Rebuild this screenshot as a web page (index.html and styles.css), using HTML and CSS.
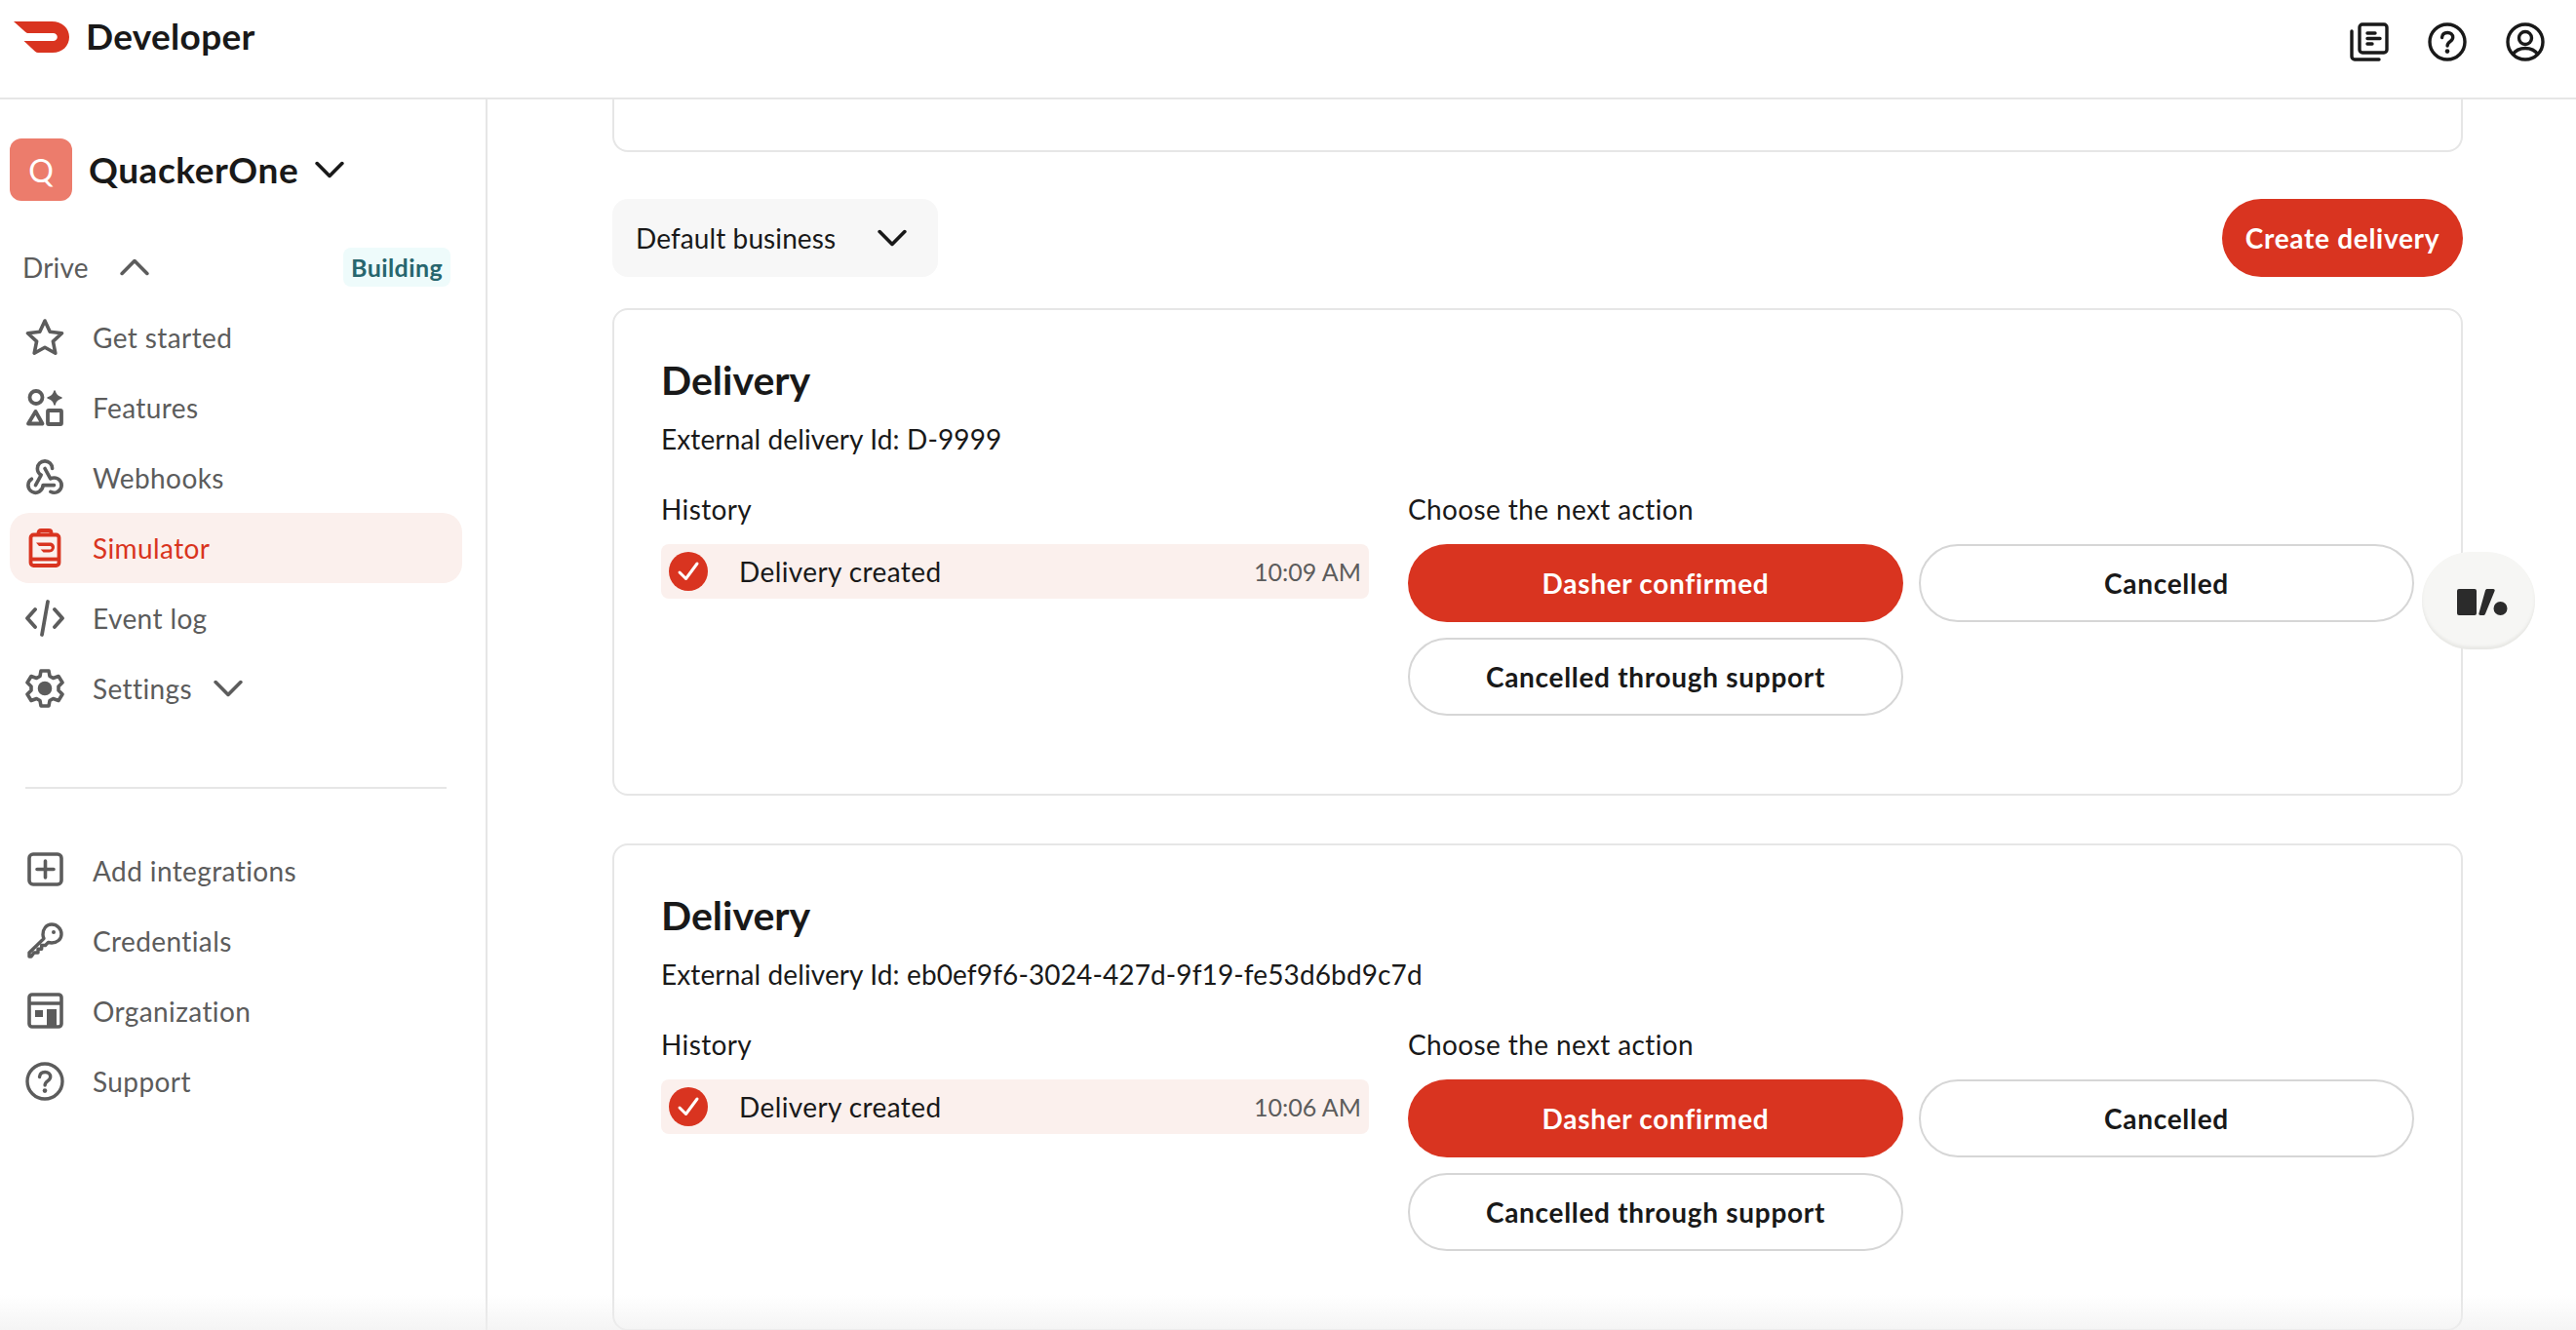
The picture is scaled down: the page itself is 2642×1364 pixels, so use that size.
FILE: index.html
```html
<!DOCTYPE html>
<html lang="en">
<head>
<meta charset="utf-8">
<title>Developer</title>
<link rel="stylesheet" href="styles.css">
</head>
<body>
<svg class="defs" width="0" height="0" aria-hidden="true">
  <symbol id="chev" viewBox="0 0 28 16"><path d="M2 2l12 12L26 2" fill="none" stroke="currentColor" stroke-width="3.4" stroke-linecap="round" stroke-linejoin="round"/></symbol>
  <symbol id="help" viewBox="0 0 40 40"><circle cx="20" cy="20" r="18" fill="none" stroke="currentColor" stroke-width="3.4"/><path d="M14.5 15.5c.3-3.2 2.6-5 5.7-5 3.200 0 5.500 2 5.500 4.800 0 2-1.100 3.200-2.800 4.400-1.700 1.200-2.800 2-2.800 4.300" fill="none" stroke="currentColor" stroke-width="3.4" stroke-linecap="round"/><circle cx="20" cy="29.600" r="2.300" fill="currentColor"/></symbol>
</svg>
<header class="topbar">
  <div class="brand">
    <svg class="logo" viewBox="0 0 58 34"><path d="M0 1h39c11 0 18 7 18 16s-7 16-17 16H25c-1 0-2-.5-3-1.300L10.500 21h30c2.500 0 4.300-1.800 4.300-4s-1.800-4-4.300-4H15c-1.200 0-2-.4-3-1.300L0 1z" fill="#d93420"/></svg>
    <span class="brand-name">Developer</span>
  </div>
  <div class="top-icons">
    <svg class="top-icon" viewBox="0 0 40 40" fill="none" stroke="currentColor" stroke-width="3.400" stroke-linecap="round" stroke-linejoin="round"><rect x="10" y="2" width="28" height="29" rx="3"/><path d="M2 9v26a3 3 0 0 0 3 3h25"/><path d="M18 11h8M18 16.500h13M18 22h5"/></svg>
    <svg class="top-icon"><use href="#help"/></svg>
    <svg class="top-icon" viewBox="0 0 40 40" fill="none" stroke="currentColor" stroke-width="3.400"><circle cx="20" cy="20" r="18"/><circle cx="20" cy="16" r="6.500"/><path d="M7 33c3-4.500 7.500-6.500 13-6.500s10 2 13 6.500"/></svg>
  </div>
</header>
<div class="shell">
  <aside class="sidebar">
    <div class="org">
      <span class="avatar">Q</span>
      <span class="org-name">QuackerOne</span>
      <svg class="org-chev"><use href="#chev"/></svg>
    </div>
    <div class="section-row">
      <span class="section-name">Drive</span>
      <svg class="section-chev"><use href="#chev"/></svg>
      <span class="badge">Building</span>
    </div>
    <nav class="nav">
      <a class="nav-item">
        <svg class="nav-icon" viewBox="0 0 40 40" fill="none" stroke="currentColor" stroke-width="3.600" stroke-linejoin="round"><path d="M20 3l5.200 11.200 12.300 1.500-9.100 8.400 2.400 12.100L20 30.200 9.200 36.200l2.400-12.100-9.100-8.400 12.300-1.500z"/></svg>
        <span>Get started</span>
      </a>
      <a class="nav-item">
        <svg class="nav-icon" viewBox="0 0 40 40" fill="none" stroke="currentColor" stroke-width="3.800" stroke-linejoin="round"><circle cx="11" cy="9.500" r="6.500"/><path d="M30 3c1 4 3 6 7 7-4 1-6 3-7 7-1-4-3-6-7-7 4-1 6-3 7-7z" fill="currentColor" stroke-width="1.500"/><path d="M10.500 24L17.500 36.500H3z"/><rect x="23" y="23" width="14" height="14" rx="1"/></svg>
        <span>Features</span>
      </a>
      <a class="nav-item">
        <svg class="nav-icon" viewBox="1.500 2.500 21 21" fill="none" stroke="currentColor" stroke-width="1.900" stroke-linecap="round" stroke-linejoin="round"><path d="M4.876 13.61a4 4 0 1 0 6.124 3.39h6"/><path d="M15.066 20.502a4 4 0 1 0 1.934 -7.502c-.706 0 -1.424 .179 -2 .5l-3 -5.500"/><path d="M16 8a4 4 0 1 0 -8 0c0 1.506 .77 2.818 2 3.500l-3 5.500"/></svg>
        <span>Webhooks</span>
      </a>
      <a class="nav-item nav-active">
        <svg class="nav-icon" viewBox="0 0 40 40" fill="none" stroke="currentColor" stroke-width="3.800" stroke-linejoin="round"><rect x="5.500" y="6.500" width="29" height="31.500" rx="3"/><path d="M13.500 6.500V4.500C13.500 3 14.500 2 16 2h8c1.500 0 2.500 1 2.500 2.500v2"/><path d="M5.500 31.500h29"/><path d="M11 14.500h14c3 0 5 2 5 4.500s-2 5.500-5.500 5.500h-6l-2.800-3H25c1 0 1.800-.8 1.800-1.800S26 18 25 18H14z" fill="currentColor" stroke="none"/></svg>
        <span>Simulator</span>
      </a>
      <a class="nav-item">
        <svg class="nav-icon" viewBox="0 0 40 40" fill="none" stroke="currentColor" stroke-width="3.800" stroke-linecap="round" stroke-linejoin="round"><path d="M10 11l-8 9 8 9M30 11l8 9-8 9M23 3l-6 34"/></svg>
        <span>Event log</span>
      </a>
      <a class="nav-item">
        <svg class="nav-icon" viewBox="0 0 40 40" fill="none" stroke="currentColor" stroke-width="3.600" stroke-linejoin="round"><path d="M16 2h8l1 5.500 3.500 2L34 7.500l4 6.500-4 4v4l4 4-4 6.500-5.500-2-3.500 2L24 38h-8l-1-5.500-3.500-2L6 32.500 2 26l4-4v-4l-4-4 4-6.500 5.500 2 3.500-2z"/><circle cx="20" cy="20" r="5.500" fill="currentColor"/></svg>
        <span>Settings</span>
        <svg class="nav-chev"><use href="#chev"/></svg>
      </a>
    </nav>
    <hr class="divider">
    <nav class="nav">
      <a class="nav-item">
        <svg class="nav-icon" viewBox="0 0 40 40" fill="none" stroke="currentColor" stroke-width="3.600" stroke-linecap="round"><rect x="4" y="3" width="33" height="31" rx="4"/><path d="M20.500 10v17M12 18.500h17"/></svg>
        <span>Add integrations</span>
      </a>
      <a class="nav-item">
        <svg class="nav-icon" viewBox="0 0 40 40" fill="none" stroke="currentColor" stroke-width="3.400" stroke-linejoin="round"><path d="M27 3c5.500 0 10 4.500 10 10s-4.500 9-10 9c-1.200 0-2.400-.2-3.500-.6l-3 3.100h-3.800v3.800h-3.700V32H9l-3 4H4v-4l15-14.500c-.5-1.200-1-2.500-1-4C18 7.500 21.500 3 27 3z"/><circle cx="29" cy="11" r="2" fill="currentColor" stroke="none"/></svg>
        <span>Credentials</span>
      </a>
      <a class="nav-item">
        <svg class="nav-icon" viewBox="0 0 40 40" fill="none" stroke="currentColor" stroke-width="3.600" stroke-linejoin="round"><rect x="4" y="3" width="33" height="33" rx="3"/><path d="M4 12h33"/><rect x="10" y="19" width="8" height="7" fill="currentColor" stroke="none"/><path d="M22 36V18h10v18" fill="currentColor" stroke="none"/></svg>
        <span>Organization</span>
      </a>
      <a class="nav-item">
        <svg class="nav-icon"><use href="#help"/></svg>
        <span>Support</span>
      </a>
    </nav>
  </aside>
  <main class="main">
    <div class="card-stub"></div>
    <div class="toolbar">
      <button class="select">Default business<svg class="select-chev"><use href="#chev"/></svg></button>
      <button class="btn btn-primary btn-create">Create delivery</button>
    </div>
    <section class="card">
      <h2 class="card-title">Delivery</h2>
      <p class="card-id">External delivery Id: D-9999</p>
      <div class="card-cols">
        <div class="col-history">
          <div class="col-label">History</div>
          <div class="history-row">
            <svg class="check" viewBox="0 0 40 40"><circle cx="20" cy="20" r="20" fill="#d93420"/><path d="M11 21l6.500 6.500L29 12" fill="none" stroke="#fff" stroke-width="3" stroke-linecap="round" stroke-linejoin="round"/></svg>
            <span class="history-text">Delivery created</span>
            <span class="history-time">10:09 AM</span>
          </div>
        </div>
        <div class="col-actions">
          <div class="col-label">Choose the next action</div>
          <div class="actions">
            <button class="btn btn-primary">Dasher confirmed</button>
            <button class="btn btn-outline">Cancelled</button>
            <button class="btn btn-outline">Cancelled through support</button>
          </div>
        </div>
      </div>
    </section>
    <section class="card">
      <h2 class="card-title">Delivery</h2>
      <p class="card-id">External delivery Id: eb0ef9f6-3024-427d-9f19-fe53d6bd9c7d</p>
      <div class="card-cols">
        <div class="col-history">
          <div class="col-label">History</div>
          <div class="history-row">
            <svg class="check" viewBox="0 0 40 40"><circle cx="20" cy="20" r="20" fill="#d93420"/><path d="M11 21l6.500 6.500L29 12" fill="none" stroke="#fff" stroke-width="3" stroke-linecap="round" stroke-linejoin="round"/></svg>
            <span class="history-text">Delivery created</span>
            <span class="history-time">10:06 AM</span>
          </div>
        </div>
        <div class="col-actions">
          <div class="col-label">Choose the next action</div>
          <div class="actions">
            <button class="btn btn-primary">Dasher confirmed</button>
            <button class="btn btn-outline">Cancelled</button>
            <button class="btn btn-outline">Cancelled through support</button>
          </div>
        </div>
      </div>
    </section>
  </main>
</div>
<div class="widget">
  <svg class="widget-icon" viewBox="0 0 52 28"><rect x="0" y="0" width="20" height="27" rx="2" fill="#2b2b2b"/><path d="M31 0h6c1.500 0 2 1 1.500 2.200L29 25.500c-.5 1-1.200 1.500-2.300 1.500H24c-1.500 0-2-1-1.500-2.200L29 1.500C29.500.5 30 0 31 0z" fill="#2b2b2b"/><circle cx="44.500" cy="20" r="7" fill="#2b2b2b"/></svg>
</div>
<div class="bottom-fade"></div>
</body>
</html>
```
FILE: styles.css
```css
* { box-sizing: border-box; }
html, body { height: 100%; }
body {
  margin: 0;
  overflow: hidden;
  background: #fff;
  color: #191919;
  font-family: "Lato", "Liberation Sans", sans-serif;
  display: flex;
  flex-direction: column;
}
.defs { position: absolute; }
.topbar {
  height: 102px;
  flex: none;
  display: flex;
  justify-content: space-between;
  align-items: flex-start;
  border-bottom: 2px solid #e6e6e6;
}
.brand { display: flex; align-items: flex-start; padding: 20px 0 0 14px; }
.logo { width: 58px; height: 34px; margin-top: 1px; }
.brand-name { margin: -3px 0 0 16px; font-size: 37px; font-weight: 700; line-height: 40px; letter-spacing: .3px; }
.top-icons { display: flex; gap: 40px; padding: 23px 32px 0 0; }
.top-icon { width: 40px; height: 40px; color: #191919; }
.shell { flex: 1; min-height: 0; display: flex; }
.sidebar {
  width: 500px;
  flex: none;
  border-right: 2px solid #e6e6e6;
  padding: 40px 24px 0 10px;
}
.org { display: flex; align-items: center; height: 64px; }
.avatar {
  width: 64px; height: 64px; border-radius: 12px;
  background: #ec7c6c; color: #fff;
  display: flex; align-items: center; justify-content: center;
  font-size: 32px;
}
.org-name { margin-left: 17px; padding-bottom: 2px; font-size: 37px; font-weight: 700; letter-spacing: .55px; }
.org-chev { width: 30px; height: 18px; margin-left: 17px; color: #191919; }
.section-row { display: flex; align-items: center; height: 40px; margin-top: 48px; padding-left: 13px; color: #5c5c5c; }
.section-name { font-size: 28px; letter-spacing: .2px; }
.section-chev { width: 30px; height: 18px; margin-left: 32px; transform: rotate(180deg); }
.badge {
  margin-left: auto; margin-right: 12px;
  background: #eefbfb; color: #27666e;
  font-size: 25px; font-weight: 700; letter-spacing: .4px;
  height: 40px; line-height: 40px; padding: 0 8px; border-radius: 8px;
}
.nav { display: flex; flex-direction: column; margin-top: 16px; }
.nav-item {
  display: flex; align-items: center; height: 72px;
  padding-left: 16px; padding-right: 8px;
  color: #5c5c5c; font-size: 28px; letter-spacing: .4px; border-radius: 20px;
}
.nav-icon { width: 40px; height: 40px; flex: none; margin-right: 29px; }
.nav-active { background: #fbf0ed; color: #d93420; }
.nav-chev { width: 30px; height: 18px; margin-left: 22px; }
.divider { border: 0; height: 2px; background: #e6e6e6; margin: 65px 0 0 16px; width: 432px; }
.divider + .nav { margin-top: 48px; }
.main { flex: 1; min-width: 0; padding: 0 116px 0 128px; overflow: hidden; }
.card-stub {
  height: 54px; border: 2px solid #e6e6e6; border-top: 0;
  border-radius: 0 0 16px 16px;
}
.toolbar { display: flex; justify-content: space-between; margin-top: 48px; height: 80px; }
button { font-family: inherit; cursor: pointer; }
.select {
  width: 334px; height: 80px; border: 0; border-radius: 16px;
  background: #f7f7f7; color: #191919; font-size: 28px; letter-spacing: .1px;
  display: flex; align-items: center; justify-content: space-between;
  padding: 0 32px 0 24px;
}
.select-chev { width: 30px; height: 18px; }
.btn {
  height: 80px; border-radius: 40px; font-size: 28px; font-weight: 700; letter-spacing: .7px;
  border: 2px solid transparent; padding: 0;
}
.btn-primary { background: #d93420; color: #fff; }
.btn-create { width: 247px; }
.btn-outline { background: #fff; color: #191919; border-color: #d6d6d6; }
.card {
  margin-top: 32px; height: 500px;
  border: 2px solid #e6e6e6; border-radius: 16px;
  padding: 48px 48px 0;
}
.card + .card { margin-top: 49px; }
.card-title { margin: 0; font-size: 41px; font-weight: 700; line-height: 48px; }
.card-id { margin: 16px 0 0; font-size: 28px; line-height: 40px; letter-spacing: .12px; }
.card-cols { display: flex; gap: 40px; margin-top: 32px; }
.col-history { width: 726px; flex: none; }
.col-actions { flex: 1; }
.col-label { font-size: 28px; line-height: 40px; letter-spacing: .38px; }
.history-row {
  margin-top: 16px; height: 56px; border-radius: 8px;
  background: #fbf0ed; display: flex; align-items: center;
  padding: 0 8px;
}
.check { width: 40px; height: 40px; flex: none; }
.history-text { margin-left: 32px; font-size: 28px; letter-spacing: .4px; }
.history-time { margin-left: auto; font-size: 25px; color: #5c5c5c; }
.actions { display: grid; grid-template-columns: 508px 508px; gap: 16px; margin-top: 16px; }
.widget {
  position: absolute; left: 2484px; top: 566px;
  width: 116px; height: 100px; border-radius: 50px;
  background: #f6f6f4; box-shadow: inset 0 -3px 3px #e8e8e5;
  display: flex; align-items: center; justify-content: center;
  padding: 4px 0 0 8px;
}
.widget-icon { width: 52px; height: 28px; }
.bottom-fade {
  position: absolute; left: 0; right: 0; bottom: 0; height: 36px;
  background: linear-gradient(to bottom, rgba(240,240,240,0), rgba(240,240,240,.7));
  pointer-events: none;
}
```
